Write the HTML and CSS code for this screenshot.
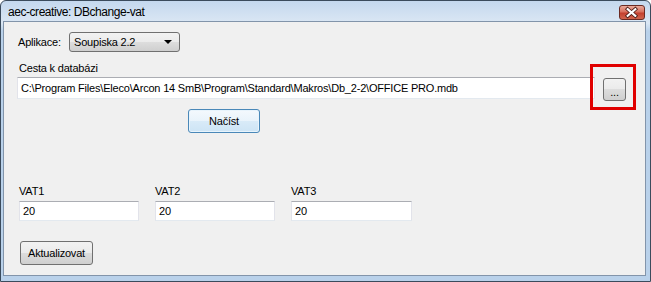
FILE: index.html
```html
<!DOCTYPE html>
<html>
<head>
<meta charset="utf-8">
<link rel="stylesheet" href="styles.css">
</head>
<body>
<div class="window">
  <div class="titlebar">
    <span class="title">aec-creative: DBchange-vat</span>
    <span class="close">
      <svg width="26" height="15" viewBox="0 0 26 15">
        <path d="M9 4 L17 11 M17 4 L9 11" stroke="#4a1a14" stroke-width="4" stroke-linecap="square"/>
        <path d="M9 4 L17 11 M17 4 L9 11" stroke="#ffffff" stroke-width="2.2" stroke-linecap="square"/>
      </svg>
    </span>
  </div>
  <div class="client">
    <div class="row-app">
      <span class="lbl">Aplikace:</span>
      <div class="combo"><span>Soupiska 2.2</span><span class="arrow"></span></div>
    </div>
    <div class="lbl path-lbl">Cesta k databázi</div>
    <div class="row-path">
      <div class="textbox path">C:\Program Files\Eleco\Arcon 14 SmB\Program\Standard\Makros\Db_2-2\OFFICE PRO.mdb</div>
      <div class="btn browse">...</div>
      <div class="highlight"></div>
    </div>
    <div class="btn load">Načíst</div>
    <div class="vat-row">
      <div class="vat"><div class="lbl">VAT1</div><div class="textbox vbox">20</div></div>
      <div class="vat"><div class="lbl">VAT2</div><div class="textbox vbox">20</div></div>
      <div class="vat"><div class="lbl">VAT3</div><div class="textbox vbox">20</div></div>
    </div>
    <div class="btn update">Aktualizovat</div>
  </div>
</div>
</body>
</html>
```
FILE: styles.css
```css
html, body { margin: 0; padding: 0; background: #ffffff; }
body { font-family: "Liberation Sans", Arial, sans-serif; font-size: 11px; color: #000; letter-spacing: -0.2px; }
.window {
  width: 651px; height: 282px; box-sizing: border-box;
  border: 1px solid #3b4b5c;
  border-radius: 6px 6px 0 0;
  background: linear-gradient(#c4d8ee, #dbe7f4 22px, #b9d1ea 30px);
  display: flex; flex-direction: column;
  overflow: hidden;
}
.titlebar {
  height: 20px; flex: none;
  display: flex; align-items: center; justify-content: space-between;
  padding: 0 5px 0 7px;
}
.title { font-size: 12px; letter-spacing: -0.45px; color: #000; margin-top: 2px; }
.close {
  width: 26px; height: 15px; margin-top: 3px;
  border: 1px solid #6b2a22; border-radius: 3px;
  background: linear-gradient(#e9a99b, #d8705d 45%, #c4402e 55%, #d0644c);
  display: flex; box-sizing: border-box;
}
.close svg { margin: -1px 0 0 -1px; }
.client {
  flex: 1; margin: 0 4px 5px 2px;
  background: #f0f0f0;
  border: 1px solid #8294aa;
  position: relative;
  padding: 0 0 0 13px;
}
.lbl { line-height: 13px; }
.row-app { display: flex; align-items: center; margin-top: 10px; height: 20px; }
.row-app .lbl { width: 51px; padding-left: 1px; }
.combo {
  width: 111px; height: 20px; box-sizing: border-box;
  border: 1px solid #707070; border-radius: 3px;
  background: linear-gradient(#f2f2f2, #ebebeb 50%, #dddddd 50%, #cfcfcf);
  display: flex; align-items: center; justify-content: space-between;
  padding: 0 7px 0 4px;
}
.arrow { width: 0; height: 0; border-left: 4px solid transparent; border-right: 4px solid transparent; border-top: 4px solid #000; }
.path-lbl { margin-top: 10px; padding-left: 2px; }
.row-path { display: flex; align-items: flex-start; margin-top: 2px; position: relative; }
.textbox {
  background: #fff; box-sizing: border-box;
  border: 1px solid #e2e3ea; border-top-color: #abadb3; border-bottom-color: #e3e9ef;
  display: flex; align-items: center; padding-left: 3px;
}
.path { width: 578px; height: 22px; }
.btn {
  box-sizing: border-box; display: flex; align-items: center; justify-content: center;
  border: 1px solid #707070; border-radius: 3px;
  background: linear-gradient(#f2f2f2, #ebebeb 50%, #dddddd 50%, #cfcfcf);
}
.browse { width: 23px; height: 23px; margin: 1px 0 0 8px; align-items: flex-end; padding-bottom: 4px; line-height: 8px; }
.highlight {
  position: absolute; left: 573px; top: -13px; width: 46px; height: 46px;
  box-sizing: border-box; border: 3px solid #e00000;
}
.load {
  width: 72px; height: 24px; margin: 8px 0 0 171px;
  border-color: #4a88b8;
  background: linear-gradient(#f4f9fd, #e9f3fb 50%, #d9ebf8 50%, #cde4f5);
  box-shadow: inset 0 0 0 1px #e8f4fc;
}
.vat-row { display: flex; gap: 16px; margin-top: 52px; padding-left: 2px; }
.vat { width: 120px; }
.vat .lbl { padding-left: 0; margin-bottom: 3px; }
.vbox { height: 20px; width: 120px; }
.vat:nth-child(3) .vbox { width: 121px; }
.update { width: 73px; height: 24px; margin: 20px 0 0 3px; }
```
